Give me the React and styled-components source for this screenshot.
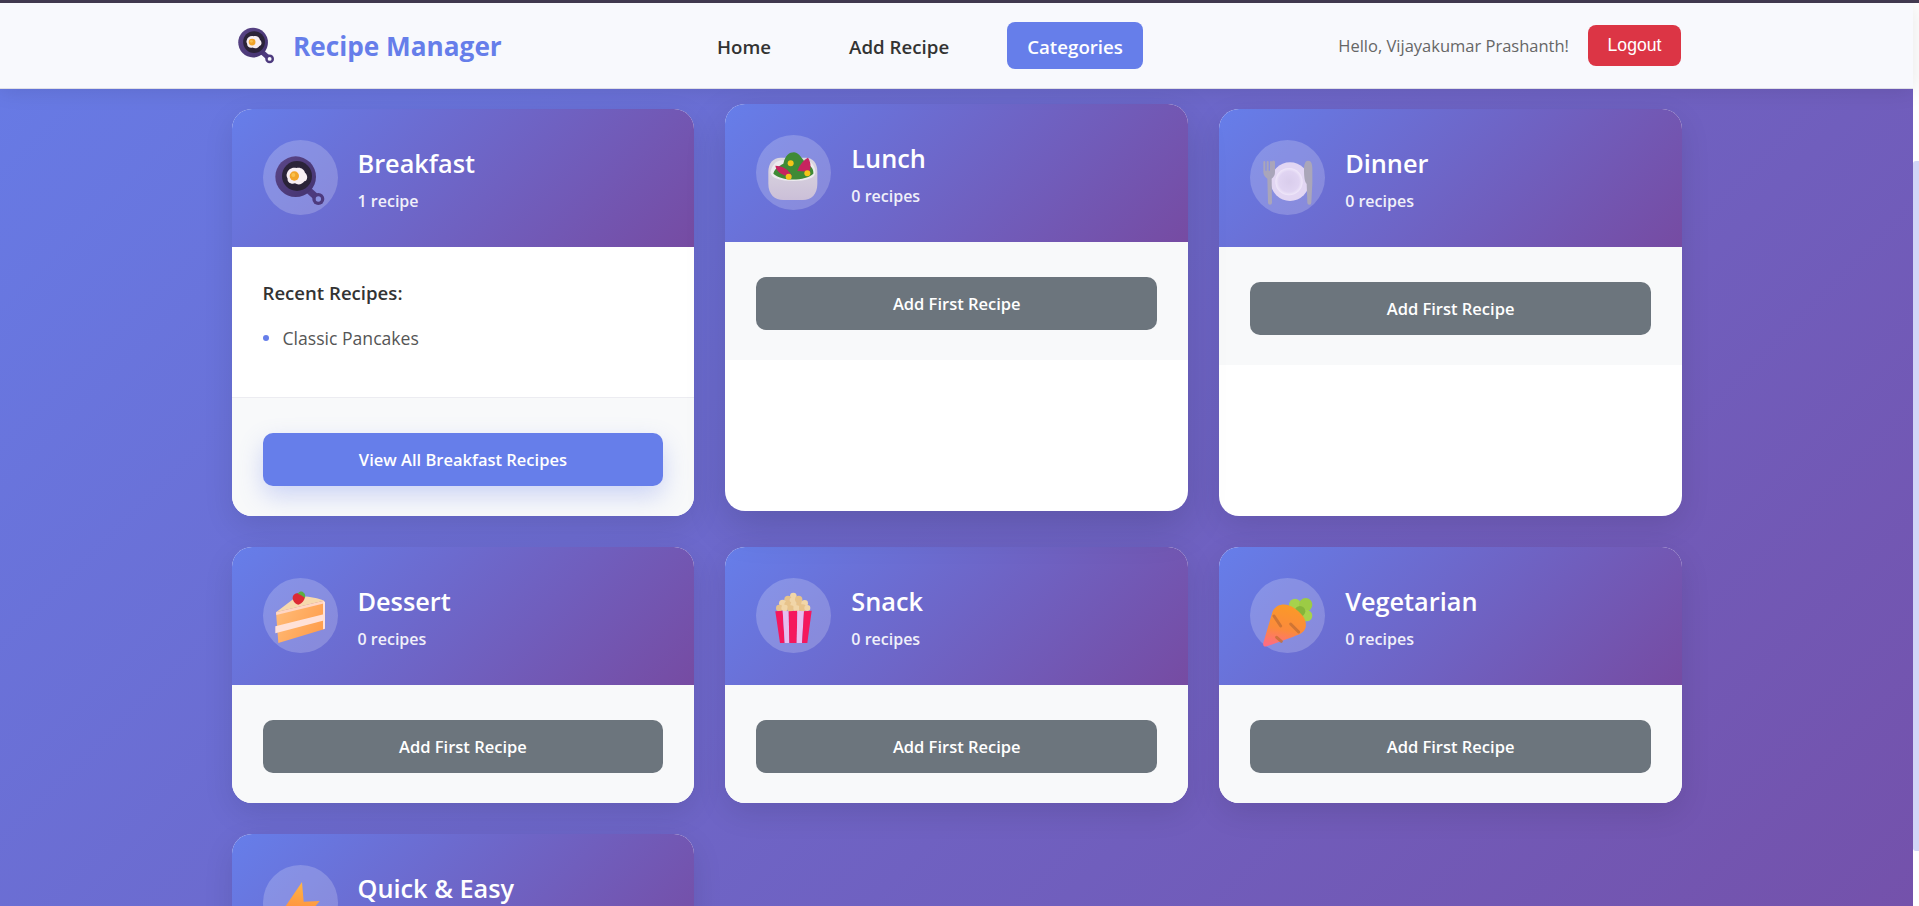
import React from "react";
import styled, { createGlobalStyle } from "styled-components";

const GlobalStyle = createGlobalStyle`
  * {
    box-sizing: border-box;
  }
  html, body {
    margin: 0;
    height: 100%;
    overflow: hidden;
    background: #fff;
  }
  body {
    font-family: "Open Sans", "Noto Sans", sans-serif;
  }
`;

const TopStrip = styled.div`
  height: 3px;
  background: #433b52;
`;

const Shell = styled.div`
  display: flex;
  height: 903px;
`;

const Page = styled.div`
  flex: 1;
  min-width: 0;
  display: flex;
  flex-direction: column;
  position: relative;
`;

const ScrollTrack = styled.div`
  width: 6px;
  background: #fff;
  padding-top: 158px;
`;

const ScrollThumb = styled.div`
  height: 690px;
  background: #d2d6f7;
  border-radius: 3px 0 0 3px;
`;

const Nav = styled.header`
  flex: none;
  height: 86px;
  background: #f8f9fd;
  border-bottom: 1px solid #dfdfe6;
  box-shadow: 0 2px 20px rgba(0, 0, 0, 0.1);
  position: relative;
  z-index: 2;
`;

const NavInner = styled.div`
  width: 1450px;
  height: 85px;
  margin-left: 231px;
  display: flex;
  align-items: center;
  justify-content: space-between;
`;

const Brand = styled.div`
  display: flex;
  align-items: center;
  gap: 18px;
  padding-left: 7px;
  font-size: 26.2px;
  font-weight: 700;
  color: #667eea;
`;

const NavLinks = styled.nav`
  display: flex;
  align-items: center;
  gap: 38px;
`;

const NavLink = styled.a`
  padding: 10px 20px;
  height: 47px;
  line-height: 29px;
  border-radius: 8px;
  font-size: 18.7px;
  font-weight: 600;
  color: ${(p) => (p.$active ? "#fff" : "#333")};
  background: ${(p) => (p.$active ? "#667eea" : "transparent")};
`;

const UserBox = styled.div`
  display: flex;
  align-items: center;
  gap: 19px;
`;

const Hello = styled.span`
  font-size: 16.5px;
  color: #666;
`;

const LogoutButton = styled.button`
  width: 93px;
  height: 41px;
  border: 0;
  border-radius: 8px;
  background: #dc3545;
  color: #fff;
  font-family: "Liberation Sans", Arial, sans-serif;
  font-size: 17.6px;
`;

const Main = styled.main`
  flex: 1;
  min-height: 0;
  overflow: hidden;
  padding-top: 20px;
  background: linear-gradient(135deg, #667eea 0%, #764ba2 100%) 0 -260px / 100% 1500px no-repeat;
`;

const Grid = styled.div`
  width: 1450.5px;
  margin-left: 231.5px;
  display: grid;
  grid-template-columns: repeat(3, 1fr);
  gap: 31px;
`;

const Card = styled.article`
  display: flex;
  flex-direction: column;
  background: #fff;
  border-radius: 20px;
  overflow: hidden;
  box-shadow: ${(p) =>
    p.$raised ? "0 15px 40px rgba(0, 0, 0, 0.15)" : "0 10px 30px rgba(0, 0, 0, 0.1)"};
  transform: ${(p) => (p.$raised ? "translateY(-5px)" : "none")};
`;

const CardHeader = styled.div`
  height: 138px;
  padding: 31px;
  display: flex;
  align-items: flex-start;
  gap: 20px;
  color: #fff;
  background: linear-gradient(135deg, #667eea 0%, #764ba2 100%);
`;

const IconCircle = styled.div`
  flex: none;
  width: 75px;
  height: 75px;
  border-radius: 50%;
  background: rgba(255, 255, 255, 0.2);
`;

const EmojiSvg = styled.svg`
  display: block;
  width: ${(p) => p.$size || 75}px;
  height: ${(p) => p.$size || 75}px;
`;

const HeaderText = styled.div`
  display: flex;
  flex-direction: column;
  padding-top: 6px;
`;

const CardTitle = styled.h3`
  margin: 0;
  font-size: 25.3px;
  line-height: 35px;
  font-weight: 600;
`;

const CardCount = styled.p`
  margin: 9px 0 0;
  font-size: 16px;
  line-height: 22px;
  font-weight: 600;
  opacity: 0.9;
`;

const CardBody = styled.div`
  height: 150px;
  padding: 33px 31px 0;
`;

const RecentTitle = styled.h4`
  margin: 0 0 20px;
  font-size: 18.6px;
  line-height: 26px;
  font-weight: 600;
  color: #333;
`;

const RecentList = styled.ul`
  margin: 0;
  padding: 0;
  list-style: none;
`;

const RecentItem = styled.li`
  display: flex;
  align-items: center;
  gap: 14px;
  font-size: 17.6px;
  line-height: 24px;
  color: #555;
  &::before {
    content: "";
    width: 6px;
    height: 6px;
    border-radius: 50%;
    background: #667eea;
  }
`;

const CardFooter = styled.div`
  height: ${(p) => (p.$divided ? "119px" : "118px")};
  padding: 35px 31px 0;
  background: #f8f9fa;
  border-top: ${(p) => (p.$divided ? "1px solid #ececf1" : "0")};
`;

const ActionButton = styled.button`
  display: block;
  width: 100%;
  height: 53px;
  border: 0;
  border-radius: 10px;
  color: #fff;
  font-family: inherit;
  font-size: 16.5px;
  font-weight: 600;
  background: ${(p) => (p.$primary ? "#667eea" : "#6c757d")};
  box-shadow: ${(p) => (p.$primary ? "0 10px 25px rgba(102, 126, 234, 0.3)" : "none")};
`;

const PanShapes = ({ hole }) => (
  <>
    <defs>
      <linearGradient id="panBody" x1="0" y1="0" x2="1" y2="1">
        <stop offset="0" stopColor="#5b4688" />
        <stop offset="1" stopColor="#43326f" />
      </linearGradient>
    </defs>
    <path d="M136 150 L166 177" stroke="#4d3a7e" strokeWidth="20" strokeLinecap="round" />
    <circle cx="166" cy="177" r="18" fill="#4d3a7e" />
    <circle cx="166" cy="177" r="8" fill={hole} />
    <circle cx="98" cy="110" r="61" fill="url(#panBody)" />
    <circle cx="102" cy="108" r="45" fill="#2b2339" />
    <path
      d="M72 100 C74 88 88 80 100 84 C112 80 124 88 126 98 C136 106 134 122 124 124 C118 134 104 136 96 130 C84 134 72 126 74 116 C70 110 70 104 72 100 Z"
      fill="#f7eef3"
    />
    <circle cx="94" cy="108" r="14" fill="#f2a42a" />
    <circle cx="91" cy="105" r="6" fill="#f9c04e" />
  </>
);

const SaladIcon = () => (
  <EmojiSvg viewBox="0 0 225 225">
    <defs>
      <linearGradient id="bowl" x1="0" y1="0" x2="0" y2="1">
        <stop offset="0" stopColor="#dcd8e0" />
        <stop offset="1" stopColor="#cbbfd8" />
      </linearGradient>
    </defs>
    <path
      d="M37 110 C37 84 52 68 74 68 H150 C170 68 184 84 184 110 V146 C184 178 166 195 140 195 H82 C56 195 37 178 37 146 Z"
      fill="url(#bowl)"
    />
    <path
      d="M44 112 C46 92 60 78 76 76 H150 C164 78 178 92 178 112 C178 130 150 138 112 138 C74 138 44 130 44 112 Z"
      fill="#ecebee"
    />
    <path d="M52 116 C56 100 70 92 82 86 C88 60 100 52 114 52 C132 54 138 74 152 86 C166 92 174 104 172 116 C150 138 76 140 52 116 Z" fill="#3f8a35" />
    <path d="M58 92 C78 92 100 104 108 124 C88 124 62 116 58 92 Z" fill="#c7245f" />
    <path d="M156 68 C164 80 166 96 160 110 L124 108 C130 90 142 76 156 68 Z" fill="#c7245f" />
    <circle cx="104" cy="85" r="9" fill="#f5c518" />
    <circle cx="98" cy="125" r="9" fill="#f5c518" />
    <circle cx="154" cy="115" r="9" fill="#f5c518" />
  </EmojiSvg>
);

const DinnerIcon = () => (
  <EmojiSvg viewBox="0 0 225 225">
    <defs>
      <radialGradient id="plate" cx="0.5" cy="0.5" r="0.5">
        <stop offset="0" stopColor="#d9cdec" />
        <stop offset="0.75" stopColor="#e0d4f2" />
        <stop offset="1" stopColor="#f0e8fa" />
      </radialGradient>
    </defs>
    <circle cx="120" cy="125" r="58" fill="#e2d6f3" />
    <circle cx="117" cy="125" r="41" fill="url(#plate)" />
    <path
      d="M40 66 a3 3 0 0 1 6 0 V92 H50 V66 a3 3 0 0 1 6 0 V92 H60 V66 a3 3 0 0 1 6 0 V66 a3 3 0 0 1 9 0 V96 C75 108 68 114 65 116 L66 188 a6 6 0 0 1 -12 0 L52 116 C46 112 40 106 40 96 Z"
      fill="#a9a5ba"
    />
    <path d="M174 62 C184 62 187 72 187 88 V130 L184 188 a6 6 0 0 1 -12 0 L170 132 C164 126 162 110 162 90 C162 72 166 62 174 62 Z" fill="#aaa6b9" />
  </EmojiSvg>
);

const CakeIcon = () => (
  <EmojiSvg viewBox="0 0 225 225">
    <defs>
      <linearGradient id="sponge" x1="0" y1="0" x2="1" y2="0.5">
        <stop offset="0" stopColor="#ffbe7c" />
        <stop offset="1" stopColor="#ff9f4e" />
      </linearGradient>
    </defs>
    <path d="M39 103 L98 58 C120 52 160 58 183 68 Z" fill="#f7d9ad" />
    <path d="M39 103 L183 68 L185 153 L46 195 Z" fill="url(#sponge)" />
    <path d="M39 103 L183 68 L185 76 L40 111 Z" fill="#ffd6c4" />
    <path d="M37 145 L185 108 V127 L37 166 Z" fill="#ffe1d8" />
    <path d="M180 68 L186 72 L186 152 L180 154 Z" fill="#ffe1d8" />
    <path d="M90 54 C94 44 112 42 124 50 C130 58 120 76 106 80 C94 78 86 64 90 54 Z" fill="#dd2a35" />
    <path d="M104 47 C110 38 118 40 122 44 C126 46 128 54 126 60 C120 54 112 50 104 47 Z" fill="#5cae3f" />
  </EmojiSvg>
);

const popcornKernels = [
  [112, 54, 10], [96, 64, 11], [112, 68, 11], [128, 64, 11], [80, 76, 11], [96, 80, 11],
  [114, 82, 11], [132, 78, 11], [146, 76, 10], [70, 90, 10], [86, 90, 10], [104, 92, 10],
  [122, 92, 10], [140, 90, 11], [154, 90, 9],
];

const PopcornIcon = () => (
  <EmojiSvg viewBox="0 0 225 225">
    {popcornKernels.map(([cx, cy, r], i) => (
      <circle key={i} cx={cx} cy={cy} r={r} fill={i % 2 ? "#e7c38b" : "#f1d6a8"} />
    ))}
    <path d="M58 100 L80 98 L86 195 H72 Z" fill="#f5175d" />
    <path d="M80 98 L98 100 L100 195 H86 Z" fill="#e6bdf0" />
    <path d="M98 100 L124 98 L122 195 H100 Z" fill="#f5175d" />
    <path d="M124 98 L144 100 L138 195 H122 Z" fill="#e6bdf0" />
    <path d="M144 100 L167 98 L154 195 H138 Z" fill="#f5175d" />
  </EmojiSvg>
);

const CarrotIcon = () => (
  <EmojiSvg viewBox="0 0 225 225">
    <defs>
      <linearGradient id="carrot" x1="0.6" y1="0" x2="0.4" y2="1">
        <stop offset="0" stopColor="#fb9a26" />
        <stop offset="0.6" stopColor="#fb8a3c" />
        <stop offset="1" stopColor="#ff6d80" />
      </linearGradient>
    </defs>
    <circle cx="135" cy="80" r="18" fill="#a6d24c" />
    <circle cx="167" cy="80" r="20" fill="#9ccb45" />
    <circle cx="170" cy="113" r="17" fill="#a6d24c" />
    <circle cx="150" cy="100" r="16" fill="#85b53a" />
    <path
      d="M68 100 C82 74 112 76 132 90 C152 104 172 122 167 148 C163 164 148 170 130 176 L50 205 C42 208 38 202 40 194 Z"
      fill="url(#carrot)"
    />
    <g stroke="#c56f34" strokeWidth="9" strokeLinecap="round" opacity="0.8">
      <path d="M72 114 L92 144" />
      <path d="M122 138 L146 162" />
      <path d="M80 178 L94 190" />
    </g>
  </EmojiSvg>
);

const BoltIcon = () => (
  <EmojiSvg viewBox="0 0 225 225">
    <defs>
      <linearGradient id="bolt" x1="0.5" y1="0" x2="0.4" y2="1">
        <stop offset="0" stopColor="#ffb545" />
        <stop offset="1" stopColor="#ff7a3c" />
      </linearGradient>
    </defs>
    <path d="M117 51 L60 135 H105 L95 200 L170 108 L122 110 Z" fill="url(#bolt)" />
  </EmojiSvg>
);

const PanIcon = () => (
  <EmojiSvg viewBox="0 0 225 225">
    <PanShapes hole="#8b92e2" />
  </EmojiSvg>
);

const BrandIcon = () => (
  <EmojiSvg viewBox="36 46 152 152" $size={37}>
    <PanShapes hole="#f8f9fd" />
  </EmojiSvg>
);

const categories = [
  { name: "Breakfast", count: "1 recipe", Icon: PanIcon, recent: ["Classic Pancakes"] },
  { name: "Lunch", count: "0 recipes", Icon: SaladIcon, raised: true },
  { name: "Dinner", count: "0 recipes", Icon: DinnerIcon },
  { name: "Dessert", count: "0 recipes", Icon: CakeIcon },
  { name: "Snack", count: "0 recipes", Icon: PopcornIcon },
  { name: "Vegetarian", count: "0 recipes", Icon: CarrotIcon },
  { name: "Quick & Easy", count: "0 recipes", Icon: BoltIcon },
];

const CategoryCard = ({ name, count, Icon, recent, raised }) => (
  <Card $raised={raised}>
    <CardHeader>
      <IconCircle>
        <Icon />
      </IconCircle>
      <HeaderText>
        <CardTitle>{name}</CardTitle>
        <CardCount>{count}</CardCount>
      </HeaderText>
    </CardHeader>
    {recent && (
      <CardBody>
        <RecentTitle>Recent Recipes:</RecentTitle>
        <RecentList>
          {recent.map((r) => (
            <RecentItem key={r}>{r}</RecentItem>
          ))}
        </RecentList>
      </CardBody>
    )}
    <CardFooter $divided={!!recent}>
      {recent ? (
        <ActionButton $primary>View All {name} Recipes</ActionButton>
      ) : (
        <ActionButton>Add First Recipe</ActionButton>
      )}
    </CardFooter>
  </Card>
);

export default function App() {
  return (
    <>
      <GlobalStyle />
      <TopStrip />
      <Shell>
        <Page>
          <Nav>
            <NavInner>
              <Brand>
                <BrandIcon />
                Recipe Manager
              </Brand>
              <NavLinks>
                <NavLink>Home</NavLink>
                <NavLink>Add Recipe</NavLink>
                <NavLink $active>Categories</NavLink>
              </NavLinks>
              <UserBox>
                <Hello>Hello, Vijayakumar Prashanth!</Hello>
                <LogoutButton>Logout</LogoutButton>
              </UserBox>
            </NavInner>
          </Nav>
          <Main>
            <Grid>
              {categories.map((c) => (
                <CategoryCard key={c.name} {...c} />
              ))}
            </Grid>
          </Main>
        </Page>
        <ScrollTrack>
          <ScrollThumb />
        </ScrollTrack>
      </Shell>
    </>
  );
}
